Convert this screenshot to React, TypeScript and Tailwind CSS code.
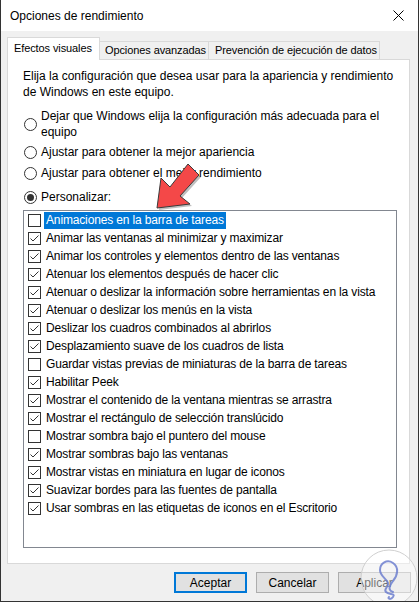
import React from 'react'

const items: { label: string; checked: boolean }[] = [
  { label: 'Animaciones en la barra de tareas', checked: false },
  { label: 'Animar las ventanas al minimizar y maximizar', checked: true },
  { label: 'Animar los controles y elementos dentro de las ventanas', checked: true },
  { label: 'Atenuar los elementos después de hacer clic', checked: true },
  { label: 'Atenuar o deslizar la información sobre herramientas en la vista', checked: true },
  { label: 'Atenuar o deslizar los menús en la vista', checked: true },
  { label: 'Deslizar los cuadros combinados al abrirlos', checked: true },
  { label: 'Desplazamiento suave de los cuadros de lista', checked: true },
  { label: 'Guardar vistas previas de miniaturas de la barra de tareas', checked: false },
  { label: 'Habilitar Peek', checked: true },
  { label: 'Mostrar el contenido de la ventana mientras se arrastra', checked: true },
  { label: 'Mostrar el rectángulo de selección translúcido', checked: true },
  { label: 'Mostrar sombra bajo el puntero del mouse', checked: false },
  { label: 'Mostrar sombras bajo las ventanas', checked: true },
  { label: 'Mostrar vistas en miniatura en lugar de iconos', checked: true },
  { label: 'Suavizar bordes para las fuentes de pantalla', checked: true },
  { label: 'Usar sombras en las etiquetas de iconos en el Escritorio', checked: true },
]

function Radio({ on }: { on?: boolean }) {
  return (
    <span className="w-[13px] h-[13px] rounded-full border border-[#333] bg-white flex items-center justify-center shrink-0">
      {on && <span className="w-[7px] h-[7px] rounded-full bg-[#333]" />}
    </span>
  )
}

function Check({ on }: { on: boolean }) {
  return (
    <span className="w-[13px] h-[13px] border border-[#333] bg-white shrink-0 flex">
      {on && (
        <svg width="11" height="11" viewBox="0 0 11 11">
          <path d="M1.5 5.5 L4 8 L9.5 2.5" fill="none" stroke="#333" strokeWidth="1" />
        </svg>
      )}
    </span>
  )
}

export default function App() {
  return (
    <div className="relative w-[419px] h-[602px] overflow-hidden bg-[#f0f0f0] border-l border-r border-b border-[#333] flex flex-col text-[12px] text-black font-['Segoe_UI','Liberation_Sans',sans-serif]">
      {/* Title bar */}
      <div className="h-[31px] bg-white flex items-center justify-between pl-[9px] pr-[14px] shrink-0">
        <span>Opciones de rendimiento</span>
        <svg width="11" height="11" viewBox="0 0 11 11">
          <path d="M0.5 0.5 L10.5 10.5 M10.5 0.5 L0.5 10.5" stroke="#000" strokeWidth="1" />
        </svg>
      </div>

      <div className="pl-[6px] pt-[6px]">
        {/* Tabs */}
        <div className="flex items-end h-[22px] whitespace-nowrap text-[11px] tracking-[-0.1px]">
          <div className="relative z-10 -mb-px h-[23px] w-[93px] shrink-0 bg-white border border-b-0 border-[#d9d9d9] flex items-center pl-[6px] pb-[2px]">
            Efectos visuales
          </div>
          <div className="h-[18px] w-[109px] shrink-0 bg-[#f0f0f0] border-t border-r border-[#d9d9d9] flex items-center pl-[5px]">
            Opciones avanzadas
          </div>
          <div className="h-[18px] w-[171px] shrink-0 bg-[#f0f0f0] border-t border-r border-[#d9d9d9] flex items-center pl-[6px]">
            Prevención de ejecución de datos
          </div>
        </div>

        {/* Panel */}
        <div className="w-[403px] h-[505px] bg-white border border-[#d9d9d9] pl-[15px] pt-[8px] flex flex-col">
          <p className="leading-[16px]">
            Elija la configuración que desea usar para la apariencia y rendimiento
            <br />
            de Windows en este equipo.
          </p>

          <div className="mt-[8px] flex items-center gap-[4px] pl-[1px]">
            <Radio />
            <span className="leading-[16px]">
              Dejar que Windows elija la configuración más adecuada para el
              <br />
              equipo
            </span>
          </div>
          <div className="mt-[4px] flex items-center gap-[4px] pl-[1px] leading-[16px]">
            <Radio />
            <span>Ajustar para obtener la mejor apariencia</span>
          </div>
          <div className="mt-[5px] flex items-center gap-[4px] pl-[1px] leading-[16px]">
            <Radio />
            <span>Ajustar para obtener el mejor rendimiento</span>
          </div>
          <div className="mt-[8px] flex items-center gap-[4px] pl-[1px] leading-[16px]">
            <Radio on />
            <span>Personalizar:</span>
          </div>

          {/* List */}
          <div className="mt-[5px] w-[374px] h-[338px] border border-[#828790] flex flex-col pl-[4px] tracking-[-0.15px]">
            {items.map((it, i) => (
              <div key={i} className="h-[18px] flex items-center">
                <Check on={it.checked} />
                <span
                  className={
                    i === 0
                      ? 'ml-[3px] px-[2px] h-[17px] leading-[17px] bg-[#0078d7] text-white'
                      : 'ml-[3px] px-[2px] leading-[17px]'
                  }
                >
                  {it.label}
                </span>
              </div>
            ))}
          </div>
        </div>
      </div>

      {/* Buttons */}
      <div className="flex justify-end gap-[9px] pr-[7px] pt-[8px]">
        <button className="w-[73px] h-[21px] bg-[#e1e1e1] border-2 border-[#0078d7] leading-none">Aceptar</button>
        <button className="w-[73px] h-[21px] bg-[#e1e1e1] border border-[#adadad] leading-none">Cancelar</button>
        <button className="w-[73px] h-[21px] bg-[#e1e1e1] border border-[#adadad] leading-none">Aplicar</button>
      </div>

      {/* Red arrow annotation */}
      <svg className="absolute inset-0 pointer-events-none" width="419" height="602">
        <polygon
          points="158,210 162,180 171,189 189,166 200,177 181,198 191,206"
          fill="#000"
          opacity="0.25"
        />
        <polygon
          points="156,208 160,178 169,187 187,164 198,175 179,196 189,204"
          fill="#f44848"
          stroke="#3a3a3a"
          strokeWidth="1"
          strokeLinejoin="round"
        />
      </svg>

      {/* Watermark */}
      <svg className="absolute left-[355px] top-[545px] pointer-events-none" width="64" height="57" viewBox="0 0 64 57">
        <circle cx="33" cy="33" r="28" fill="#fff" fillOpacity="0.45" stroke="#d0d0d0" strokeWidth="1" />
        <path
          d="M37 47 C31 45 34 40 37 36 C42 30 43 22 37 18 C31 14 24 18 24 25 C24 31 30 33 32 38 C33 42 27 44 30 47 C33 50 40 48 37 52 C35 55 31 54 33 52"
          fill="none"
          stroke="#6d7fcf"
          strokeWidth="2"
          strokeLinecap="round"
          opacity="0.85"
        />
      </svg>
    </div>
  )
}
